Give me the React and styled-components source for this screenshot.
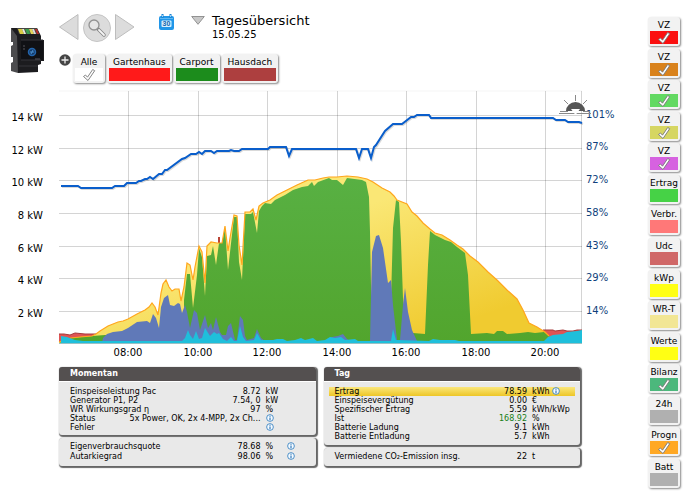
import { useState } from "react";
import styled, { createGlobalStyle } from "styled-components";

const sources = [
  { name: "Alle", color: "#ffffff", checked: true },
  { name: "Gartenhaus", color: "#ff1a1a" },
  { name: "Carport", color: "#1c8c1c" },
  { name: "Hausdach", color: "#ad3f3f" },
];

const layers = [
  { name: "VZ", color: "#fb1010", checked: true },
  { name: "VZ", color: "#d9821c", checked: true },
  { name: "VZ", color: "#62d962", checked: true },
  { name: "VZ", color: "#d6d662", checked: true },
  { name: "VZ", color: "#d662e0", checked: true },
  { name: "Ertrag", color: "#46d246" },
  { name: "Verbr.", color: "#ff7878" },
  { name: "Udc", color: "#d06868" },
  { name: "kWp", color: "#ffff14" },
  { name: "WR-T", color: "#f2e694" },
  { name: "Werte", color: "#ffff14" },
  { name: "Bilanz", color: "#4cb87c", checked: true },
  { name: "24h", color: "#b0b0b0" },
  { name: "Progn", color: "#ffa824", checked: true },
  { name: "Batt", color: "#b0b0b0" },
];

const powerTicks = [
  ["14 kW", 115],
  ["12 kW", 148],
  ["10 kW", 180],
  ["8 kW", 213],
  ["6 kW", 246],
  ["4 kW", 278],
  ["2 kW", 311],
];

const percentTicks = [
  ["101%", 114],
  ["87%", 146],
  ["72%", 179],
  ["58%", 212],
  ["43%", 245],
  ["29%", 277],
  ["14%", 310],
];

const hours = [
  ["08:00", 128],
  ["10:00", 198],
  ["12:00", 267],
  ["14:00", 337],
  ["16:00", 406],
  ["18:00", 476],
  ["20:00", 545],
];

const redLeft =
  "59,334 64,334 70,335 75,333 85,334 100,334 130,335 150,336";
const redRight = "543,330 553,330 555,331 563,330 567,331 573,331 577,330 582,330";

const yieldLine =
  "59,342 71,338 80,337 92,336 96,334 100,331 108,326 118,322 123,321 128,319 137,314 145,310 149,307 152,303 155,307 158,315 161,293 163,284 166,280 169,287 172,291 175,289 179,289 181,301 184,287 187,263 190,265 193,280 195,267 199,246 202,252 205,283 207,246 211,242 217,243 222,243 225,226 228,251 230,238 234,215 237,216 239,245 242,265 245,212 250,212 253,209 256,220 259,206 263,203 270,200 277,195 287,190 297,185 308,180 315,180 323,178 329,177 337,177 347,176 358,177 367,179 373,182 382,188 390,192 394,196 397,200 407,204 412,212 417,216 423,223 430,229 435,233 442,235 450,240 457,245 463,249 470,256 478,262 488,272 497,280 507,290 517,299 523,310 529,323 537,327 545,332 549,336";

const green =
  "59,343 71,338 92,336 105,335 184,335 184,300 187,274 190,274 193,308 197,275 199,248 202,257 205,296 207,256 211,255 213,246 216,265 219,243 222,243 225,228 228,270 234,217 237,217 239,262 242,280 245,214 251,214 253,212 257,233 259,211 262,206 265,203 271,204 275,200 285,195 293,190 302,187 308,186 312,182 314,186 318,182 329,178 332,180 337,180 343,185 347,178 362,180 366,182 369,197 370,232 371,285 372,340 388,340 391,300 393,228 396,200 399,202 401,242 403,298 406,332 413,333 425,334 428,265 430,231 435,235 445,240 451,242 457,247 465,253 468,275 471,334 487,333 494,334 497,331 503,331 507,334 520,333 528,332 535,333 544,332 549,336 549,343";

const blue =
  "102,343 103,338 107,334 113,332 122,331 128,328 137,322 147,321 150,323 153,314 156,318 159,328 161,307 164,298 168,295 170,305 174,306 178,303 180,304 182,313 185,305 187,312 190,328 194,310 197,313 200,330 205,315 208,328 211,323 213,330 216,317 220,332 222,335 226,335 228,326 231,323 235,340 237,340 240,316 243,320 245,336 247,340 254,338 257,329 261,338 265,341 327,341 332,337 338,336 343,334 347,339 350,341 370,341 372,252 376,236 379,235 383,248 388,283 391,280 393,305 397,340 400,340 403,305 405,288 408,312 412,330 417,341 417,343";

const cyan =
  "61,343 61,336 67,337 75,340 83,341 182,341 185,338 188,330 190,335 193,339 196,331 199,339 202,338 205,328 210,336 214,332 217,334 219,333 223,339 227,341 231,337 234,341 237,341 240,326 243,337 246,341 254,340 257,333 261,340 273,340 277,339 283,339 287,341 295,340 301,338 305,340 313,338 317,341 325,340 330,337 335,338 341,337 345,340 355,339 358,341 391,341 393,329 396,340 429,341 433,339 440,340 455,340 459,341 544,341 548,337 553,335 563,334 567,332 577,331 582,330 582,343";

const chargeLine =
  "61,186 78,186 81,188 112,188 115,186 124,186 127,183 136,183 139,181 141,181 145,179 147,179 150,177 153,179 159,174 162,174 165,170 167,170 182,159 185,158 191,154 196,154 199,152 202,154 205,151 211,151 214,153 217,151 229,151 231,150 234,151 239,151 242,149 268,149 270,147 286,147 289,156 292,149 356,149 359,158 362,149 368,149 371,158 374,147 376,145 385,131 393,124 402,124 411,117 414,117 417,115 429,115 431,118 553,118 556,120 565,120 568,122 579,122 582,123";

function Tick() {
  return (
    <TickIcon viewBox="0 0 14 14" aria-hidden="true">
      <path
        d="M1.5 8.5 3.5 7l2 2.2L10.7 1.5l2 1.2L6 12.5Z"
        fill="#fff"
        stroke="#777"
        strokeWidth="0.9"
        strokeLinejoin="round"
      />
    </TickIcon>
  );
}

function Toggle({ item, side }) {
  const [on, setOn] = useState(Boolean(item.checked));
  return (
    <ToggleLabel>
      <ToggleName $side={side}>{item.name}</ToggleName>
      <Swatch
        type="checkbox"
        checked={on}
        onChange={() => setOn(!on)}
        $color={item.color}
      />
      {on && <Tick />}
    </ToggleLabel>
  );
}

function Info() {
  return (
    <InfoButton type="button" aria-label="Info">
      <svg viewBox="0 0 10 10" width="8" height="8">
        <circle cx="5" cy="5" r="4.2" fill="#f4faff" stroke="#2a78bc" strokeWidth="1" />
        <path d="M5 2.2v1.2M5 4.3v3.4" stroke="#1767b0" strokeWidth="1.3" />
      </svg>
    </InfoButton>
  );
}

function Device() {
  return (
    <DeviceImage viewBox="0 0 36 48" role="img" aria-label="Solar-Log">
      <path d="M1 1 8 4v42l-7-2v-8l2-1v-5H1V19l2-1v-3H1Z" fill="#4c4c4e" />
      <path d="M1 1h26l4 8v4h3v21h-3v3l-3 1v7l-20 1L7 9Z" fill="#1c1c1f" />
      <path d="M7 1h20l2 6H9Z" fill="#474740" />
      <path d="M8 2h4l2 5h-4Z" fill="#d9ca42" />
      <path d="M12 2h2l2 5h-2Z" fill="#e8e8dd" />
      <path d="M15 2h4l1 5h-3Z" fill="#3a9c4e" />
      <path d="M19 2h3l2 5h-3Z" fill="#e2d45a" />
      <path d="M22 2h2l2 5h-2Z" fill="#dedede" />
      <path d="M25 2h2l2 5h-2Z" fill="#b92c2c" />
      <path d="M11 13h22v20H11Z" fill="#101115" />
      <path d="M11 13h22M11 33h20M9 39h19" stroke="#35353a" strokeWidth="1" />
      <circle cx="22" cy="25" r="3.5" fill="#143a68" stroke="#2465ac" strokeWidth="1.5" />
      <path d="M20 25h4M23 23l-2 4" stroke="#4b91d1" strokeWidth="1" />
      <path d="M13 19h2M13 22h2M25 32h5" stroke="#55555c" strokeWidth="1" />
    </DeviceImage>
  );
}

function Chart() {
  return (
    <ChartSvg viewBox="0 90 640 270" role="img" aria-label="Tagesverlauf">
      <defs>
        <linearGradient id="yield" x1="0" y1="0" x2="1" y2="1">
          <stop offset="0.4" stopColor="#fae775" />
          <stop offset="0.85" stopColor="#f0cb30" />
        </linearGradient>
        <linearGradient id="use" x1="0" y1="0" x2="0" y2="1">
          <stop offset="0" stopColor="#58b043" />
          <stop offset="1" stopColor="#52a52d" />
        </linearGradient>
      </defs>
      <path d="M59 91H582" stroke="#f5f5f5" />
      <g stroke="#000" strokeOpacity="0.17">
        {powerTicks.map(([label, y]) => (
          <path key={label} d={`M59 ${y + 0.5}H582`} />
        ))}
        {hours.map(([label, x]) => (
          <path key={label} d={`M${x + 0.5} 91V343`} />
        ))}
        <path d="M581.5 91V343" />
      </g>
      <polygon points={`59,343 ${redLeft} 150,343`} fill="#e05454" />
      <polyline points={redLeft} fill="none" stroke="#a63a3a" />
      <polygon points={`543,343 ${redRight} 582,343`} fill="#e05454" />
      <polyline points={redRight} fill="none" stroke="#a63a3a" />
      <path d="M218 243v-6h2v6Z" fill="#b94435" />
      <polygon points={`${yieldLine} 549,343 59,343`} fill="url(#yield)" />
      <polygon points={green} fill="url(#use)" />
      <polyline points={yieldLine} fill="none" stroke="#ffa61c" strokeWidth="1.2" />
      <polygon points={blue} fill="#6079b8" />
      <polygon points={cyan} fill="#1fbfdb" />
      <path d="M59 343.5H582" stroke="#55989c" strokeOpacity="0.6" />
      <polyline
        points={chargeLine}
        transform="translate(1 1)"
        fill="none"
        stroke="#000"
        strokeOpacity="0.15"
        strokeWidth="2"
      />
      <polyline points={chargeLine} fill="none" stroke="#0a5ecb" strokeWidth="2" />
      {powerTicks.map(([label, y]) => (
        <AxisText key={label} x="43" y={y + 6} textAnchor="end">
          {label}
        </AxisText>
      ))}
      {hours.map(([label, x]) => (
        <AxisText key={label} x={x} y="356" textAnchor="middle">
          {label}
        </AxisText>
      ))}
      {percentTicks.map(([label, y]) => (
        <AxisText key={label} x="586" y={y + 4} $blue>
          {label}
        </AxisText>
      ))}
      <g stroke="#8a8a8a" strokeWidth="1">
        <path d="M575.5 95v6M564 100l4 4M587 100l-4 4" />
        <path d="M560 111.5h8M583 111.5h7M559 113.5h32" />
      </g>
      <path d="M566 111a9.5 9 0 0 1 19 0Z" fill="#555" />
      <path d="M571 109h9l-4.5 6Z" fill="#fff" />
    </ChartSvg>
  );
}

function Rows({ rows, infoColumn, summary }) {
  return (
    <Table $summary={summary}>
      <tbody>
        {rows.map((row) => (
          <Row
            key={row.label}
            $highlight={row.highlight}
            $good={row.good}
            $unitWidth={infoColumn ? 26 : 48}
          >
            <th scope="row">{row.label}</th>
            <td>{row.value}</td>
            <td>
              {row.unit} {row.info && <Info />}
            </td>
            {infoColumn && <td>{row.extra && <Info />}</td>}
          </Row>
        ))}
      </tbody>
    </Table>
  );
}

function App() {
  return (
    <>
      <GlobalStyle />
      <Page>
        <Main>
          <Header>
            <Device />
            <Controls>
              <Toolbar>
                <IconButton type="button" aria-label="Vorheriger Tag">
                  <svg width="20" height="26" viewBox="0 0 20 26">
                    <path d="M19 .5v25L.5 13Z" fill="#dcdcdc" stroke="#bdbdbd" />
                  </svg>
                </IconButton>
                <IconButton type="button" aria-label="Zoom">
                  <svg width="28" height="28" viewBox="0 0 28 28">
                    <circle cx="14" cy="14" r="13.5" fill="#dcdcdc" stroke="#c4c4c4" />
                    <path d="m15 15 6 6" stroke="#858585" strokeWidth="3.5" strokeLinecap="round" />
                    <path d="m16 16 5 5" stroke="#f5f5f5" strokeWidth="1.8" strokeLinecap="round" />
                    <circle cx="11" cy="11" r="5" fill="#e6e6e6" stroke="#929292" strokeWidth="1.3" />
                  </svg>
                </IconButton>
                <IconButton type="button" aria-label="Nächster Tag">
                  <svg width="20" height="26" viewBox="0 0 20 26">
                    <path d="M.5.5v25L19 13Z" fill="#dcdcdc" stroke="#bdbdbd" />
                  </svg>
                </IconButton>
                <CalendarButton type="button" aria-label="Kalender">
                  <svg width="15" height="16" viewBox="0 0 15 16">
                    <rect x="0" y="2" width="15" height="14" rx="2" fill="#2196e8" />
                    <path d="M1 4.5h13" stroke="#5fb8f3" />
                    <path d="M3.5 0v4M11.5 0v4" stroke="#1683d4" strokeWidth="2" />
                    <path d="M3.5 1v2M11.5 1v2" stroke="#cdeaff" strokeWidth="0.7" />
                    <rect x="2.5" y="6.5" width="10" height="6.5" rx="1" fill="#d8efff" />
                    <text x="7.5" y="12.3" textAnchor="middle" fontSize="7" fontWeight="bold" fill="#1266ab">30</text>
                  </svg>
                </CalendarButton>
                <ViewButton type="button" aria-label="Ansicht wählen">
                  <svg width="14" height="9" viewBox="0 0 14 9">
                    <path d="M.7.5h12.6L7 8.3Z" fill="#c8c8c8" stroke="#929292" />
                  </svg>
                </ViewButton>
                <Heading>
                  <h1>Tagesübersicht</h1>
                  <p>15.05.25</p>
                </Heading>
              </Toolbar>
              <Sources>
                <IconButton type="button" aria-label="Hinzufügen">
                  <svg width="12" height="12" viewBox="0 0 12 12">
                    <circle cx="6" cy="6" r="5.7" fill="#454545" />
                    <path d="M6 2.5v7M2.5 6h7" stroke="#eee" strokeWidth="1.3" />
                  </svg>
                </IconButton>
                {sources.map((item) => (
                  <Toggle key={item.name} item={item} />
                ))}
              </Sources>
            </Controls>
          </Header>
          <Chart />
          <Panels>
            <Panel>
              <Card>
                <h2>Momentan</h2>
                <Rows
                  infoColumn
                  rows={[
                    { label: "Einspeiseleistung Pac", value: "8.72", unit: "kW" },
                    { label: "Generator P1, P2", value: "7.54, 0", unit: "kW" },
                    { label: "WR Wirkungsgrad η", value: "97", unit: "%" },
                    { label: "Status", value: "5x Power, OK, 2x 4-MPP, 2x Ch...", info: true },
                    { label: "Fehler", info: true },
                  ]}
                />
              </Card>
              <Card>
                <Rows
                  infoColumn
                  summary
                  rows={[
                    { label: "Eigenverbrauchsquote", value: "78.68", unit: "%", extra: true },
                    { label: "Autarkiegrad", value: "98.06", unit: "%", extra: true },
                  ]}
                />
              </Card>
            </Panel>
            <Panel>
              <Card>
                <h2>Tag</h2>
                <Rows
                  rows={[
                    { label: "Ertrag", value: "78.59", unit: "kWh", info: true, highlight: true },
                    { label: "Einspeisevergütung", value: "0.00", unit: "€" },
                    { label: "Spezifischer Ertrag", value: "5.59", unit: "kWh/kWp" },
                    { label: "Ist", value: "168.92", unit: "%", good: true },
                    { label: "Batterie Ladung", value: "9.1", unit: "kWh" },
                    { label: "Batterie Entladung", value: "5.7", unit: "kWh" },
                  ]}
                />
              </Card>
              <Card>
                <Rows
                  summary
                  rows={[{ label: "Vermiedene CO₂-Emission insg.", value: "22", unit: "t" }]}
                />
              </Card>
            </Panel>
          </Panels>
        </Main>
        <Sidebar>
          {layers.map((item, i) => (
            <Toggle key={i} item={item} side />
          ))}
        </Sidebar>
      </Page>
    </>
  );
}

export default App;

const GlobalStyle = createGlobalStyle`
  * {
    box-sizing: border-box;
  }

  body {
    margin: 0;
    background: #fff;
    color: #000;
    font-family: Verdana, "DejaVu Sans", sans-serif;
  }

  button {
    padding: 0;
    border: 0;
    background: none;
    cursor: pointer;
  }

  svg {
    display: block;
  }
`;

const Page = styled.div`
  display: grid;
  grid-template-columns: 1fr 50px;
  min-height: 100vh;
`;

const Main = styled.main`
  min-width: 0;
`;

const Header = styled.header`
  display: flex;
  gap: 13px;
  padding: 14px 0 7px 10px;
`;

const DeviceImage = styled.svg`
  width: 36px;
  height: 48px;
  margin-top: 13px;
`;

const Controls = styled.div`
  display: flex;
  flex-direction: column;
  gap: 11px;
`;

const Toolbar = styled.div`
  display: flex;
  align-items: flex-start;
  height: 29px;
  gap: 4px;
`;

const IconButton = styled.button`
  flex: none;
`;

const CalendarButton = styled(IconButton)`
  margin-left: 20px;
`;

const ViewButton = styled(IconButton)`
  margin: 2px 3px 0 13px;
`;

const Heading = styled.div`
  h1 {
    margin: 0;
    font-size: 13px;
    line-height: 14px;
    font-weight: normal;
  }

  p {
    margin: 0;
    font-size: 10px;
    line-height: 13px;
  }
`;

const Sources = styled.div`
  display: flex;
  align-items: flex-start;
  gap: 2px;
`;

const ToggleLabel = styled.label`
  position: relative;
  display: flex;
  flex-direction: column;
  flex: none;
  min-width: 32px;
  padding: 3px 2px 2px;
  border-radius: 3px;
  background: #f2f2f2;
  box-shadow: 1px 1px 2px #888;
  cursor: pointer;
`;

const ToggleName = styled.span`
  padding: ${(props) => (props.$side ? "0" : "0 4px")};
  font-size: 9px;
  line-height: 11px;
  text-align: center;
  white-space: nowrap;
`;

const Swatch = styled.input`
  appearance: none;
  height: 13px;
  margin: 0;
  width: 100%;
  background: ${(props) => props.$color};
  cursor: pointer;
`;

const TickIcon = styled.svg`
  position: absolute;
  bottom: 1px;
  left: 50%;
  width: 14px;
  height: 14px;
  margin-left: -7px;
  pointer-events: none;
`;

const ChartSvg = styled.svg`
  width: 100%;
`;

const AxisText = styled.text`
  fill: ${(props) => (props.$blue ? "#103f7c" : "#000")};
  font-size: 10px;
`;

const Panels = styled.div`
  display: grid;
  grid-template-columns: 1fr 1fr;
  gap: 8px;
  padding: 7px 60px 0 59px;
`;

const Panel = styled.section`
  display: flex;
  flex-direction: column;
  gap: 3px;
  min-width: 0;
`;

const Card = styled.div`
  overflow: hidden;
  border-radius: 3px;
  background: #e9e9e9;
  box-shadow: 1px 1px 1px 1px #666;

  &:first-child {
    flex: 1;
  }

  h2 {
    margin: 0 0 5px;
    padding: 0 11px;
    border-bottom: 1px solid #fff;
    background: #545050;
    color: #fff;
    font-size: 8px;
    line-height: 14px;
  }
`;

const Table = styled.table`
  width: 100%;
  padding: ${(props) => (props.$summary ? "4px 5px" : "0 5px 3px")};
  border-spacing: 0;
  table-layout: fixed;
  font-size: 8px;
  line-height: ${(props) => (props.$summary ? "10px" : "9px")};
`;

const Row = styled.tr`
  background: ${(props) =>
    props.$highlight ? "linear-gradient(#fbe77c, #edc626)" : "none"};

  th,
  td {
    padding: 0;
    font-weight: normal;
    white-space: nowrap;
  }

  th {
    width: 50px;
    padding-left: 6px;
    text-align: left;
  }

  td:nth-child(2) {
    text-align: right;
    color: ${(props) => (props.$good ? "#188018" : "#000")};
  }

  td:nth-child(3) {
    width: ${(props) => props.$unitWidth}px;
    padding-left: 5px;
  }

  td:nth-child(4) {
    width: 24px;
  }
`;

const InfoButton = styled.button`
  display: inline-block;
  height: 8px;
  vertical-align: top;
`;

const Sidebar = styled.aside`
  display: flex;
  flex-direction: column;
  align-items: flex-start;
  justify-content: space-between;
  padding: 17px 0 8px 8px;
`;
